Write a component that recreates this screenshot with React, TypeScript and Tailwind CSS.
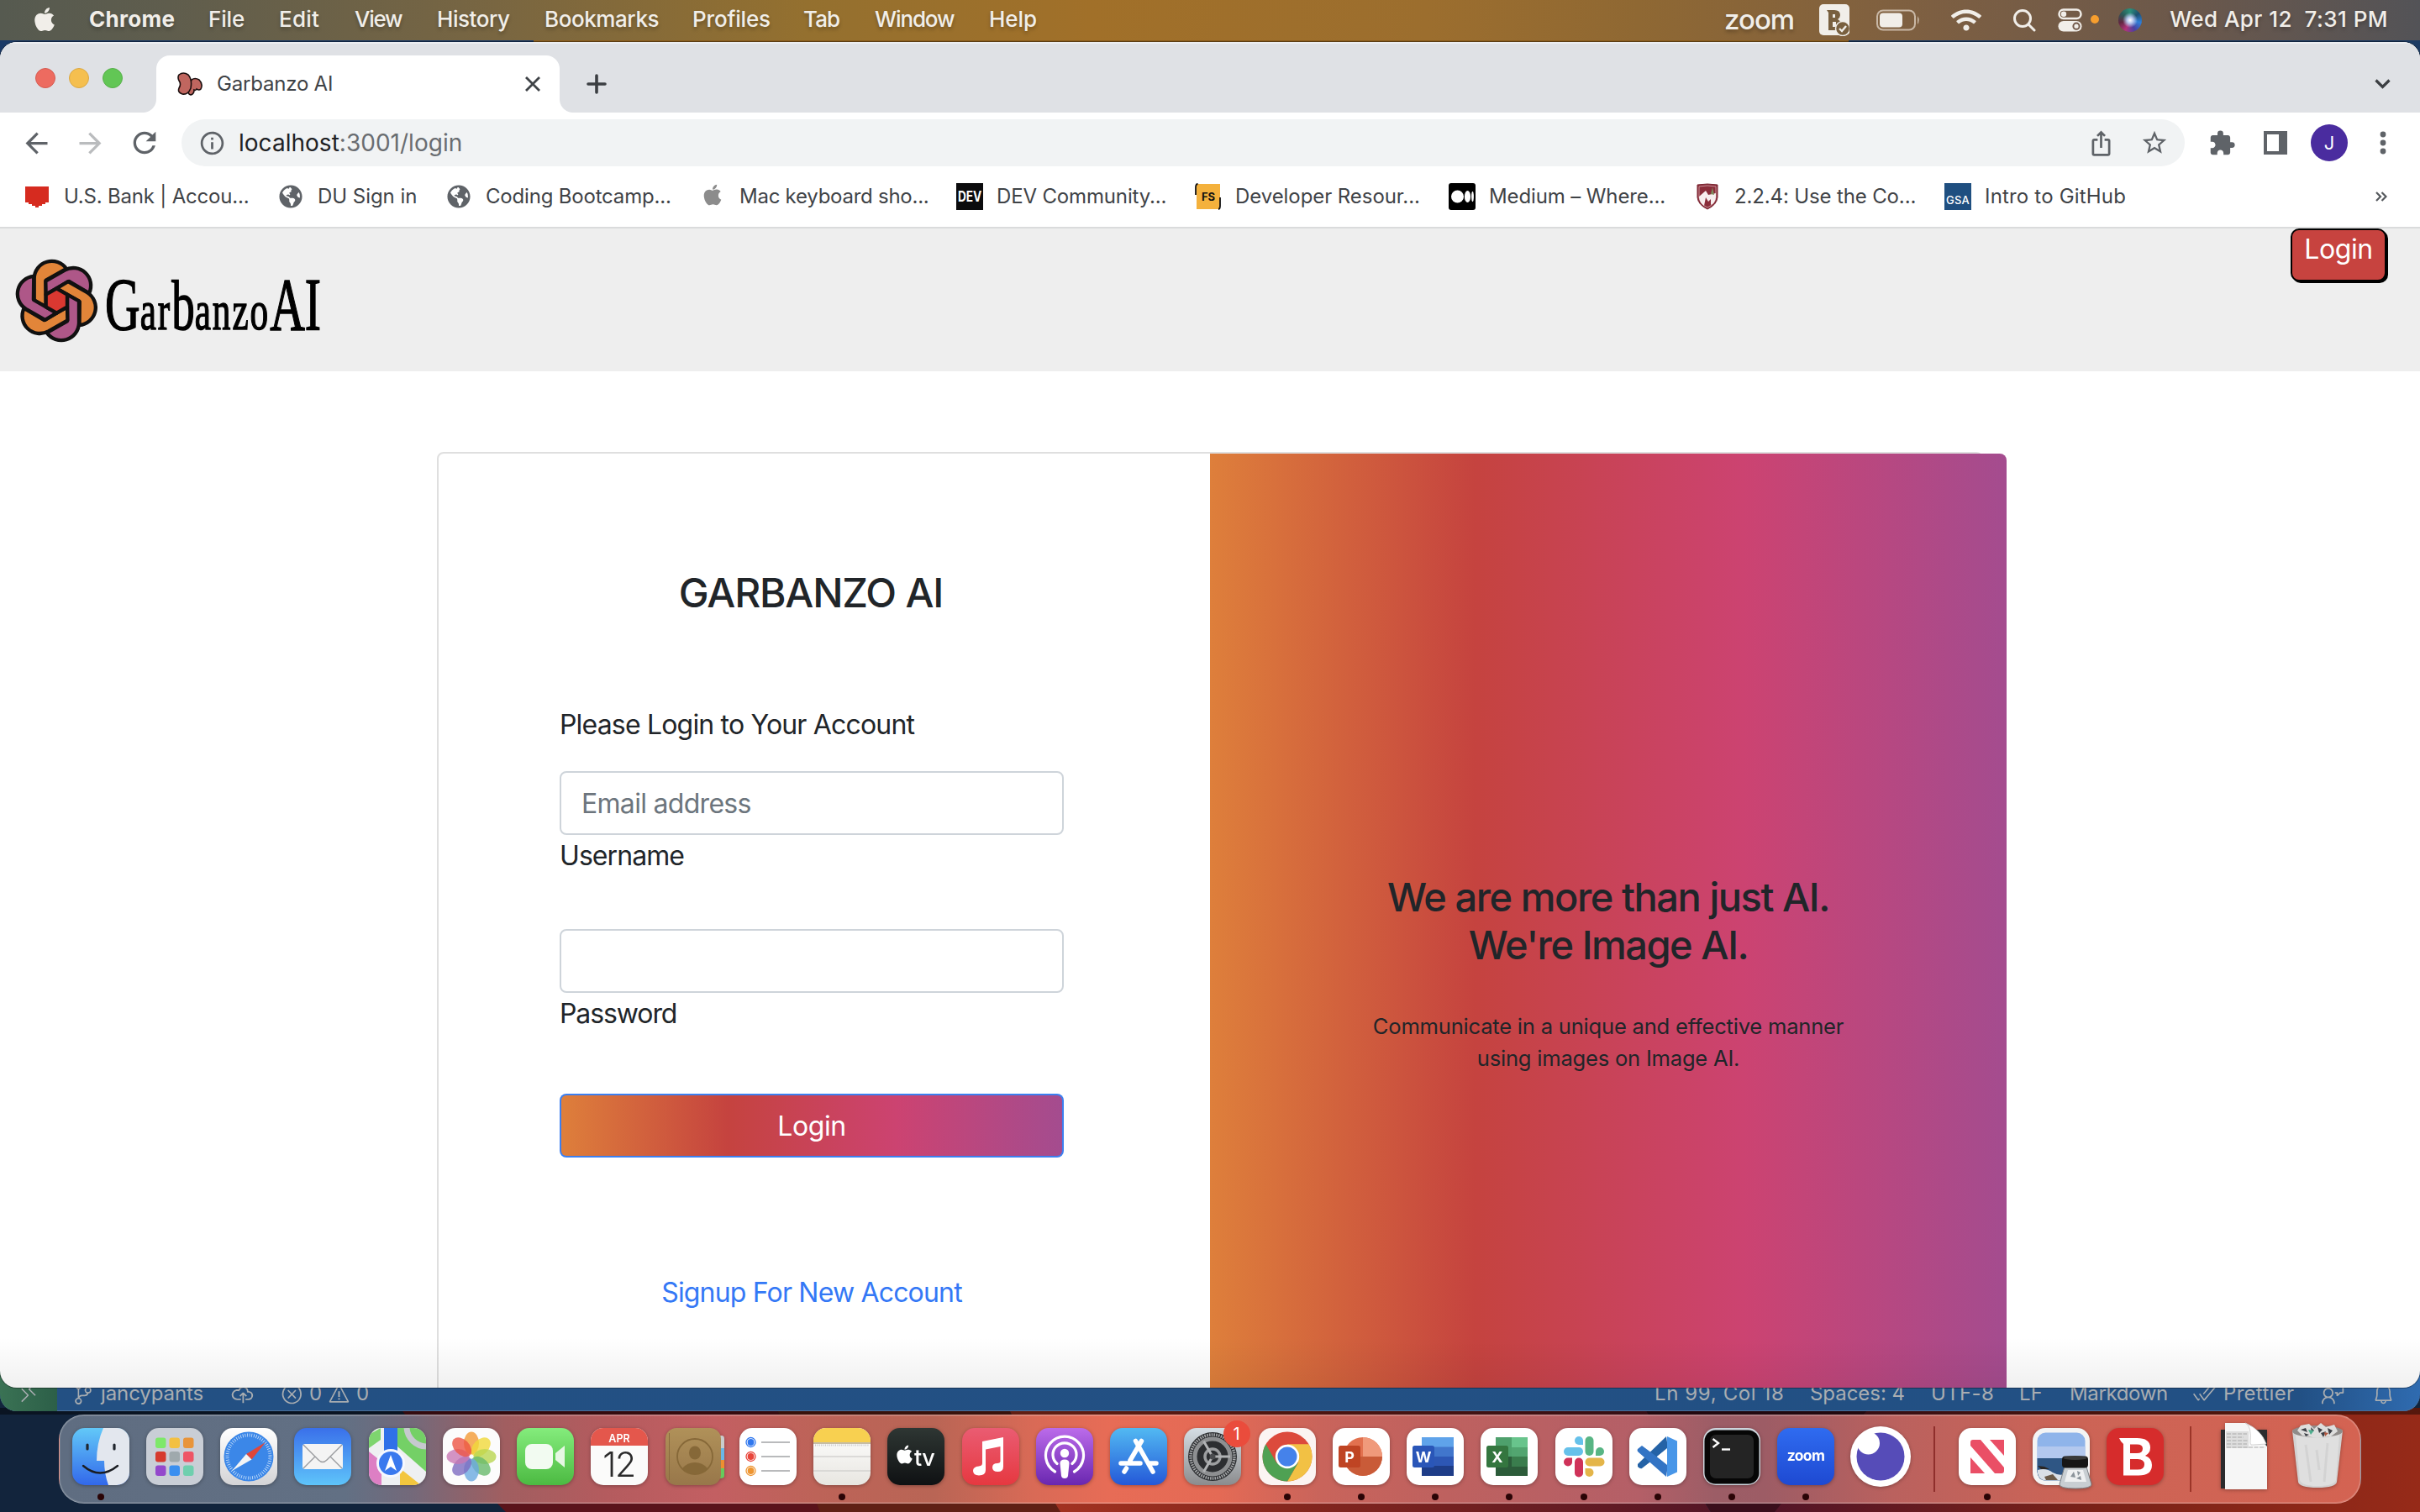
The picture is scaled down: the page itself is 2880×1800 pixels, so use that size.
import type { ReactNode } from "react";
import { FaApple, FaWifi, FaGlobeAmericas } from "react-icons/fa";
import {
  MdArrowBack,
  MdArrowForward,
  MdRefresh,
  MdInfoOutline,
  MdIosShare,
  MdStarBorder,
  MdExtension,
} from "react-icons/md";
import {
  VscRemote,
  VscSourceControl,
  VscCloudUpload,
  VscError,
  VscWarning,
  VscCheckAll,
  VscFeedback,
  VscBell,
} from "react-icons/vsc";

function Wallpaper() {
  return (
    <svg className="absolute inset-0" width="2880" height="1800" viewBox="0 0 2880 1800">
      <defs>
        <linearGradient id="wpRight" x1="0" x2="1">
          <stop offset="0" stopColor="#541527" />
          <stop offset="0.5" stopColor="#7a2218" />
          <stop offset="1" stopColor="#962a18" />
        </linearGradient>
        <linearGradient id="wpMid" x1="0" x2="1">
          <stop offset="0" stopColor="#a83522" />
          <stop offset="0.4" stopColor="#85261d" />
          <stop offset="1" stopColor="#551626" />
        </linearGradient>
      </defs>
      <rect width="2880" height="1800" fill="#12243c" />
      <path d="M635 46H2200V52H635Z" fill="#8a5c1c" />
      <path d="M2200 46H2880V100H2200Z" fill="#1b3a63" />
      <rect y="46" width="635" height="60" fill="#1b3a66" />
      <path d="M476 1676L482 1684L594 1792L602 1800H980L924 1676Z" fill="#5a131b" />
      <path d="M924 1676L972 1790L976 1800H1262L1200 1676Z" fill="#602015" />
      <path d="M1200 1676L1256 1790L1262 1800H2036L1957 1676Z" fill="url(#wpMid)" />
      <path d="M1957 1676L2030 1790L2036 1800H2112L2225 1676Z" fill="#3a0e1b" />
      <path d="M2225 1676L2120 1790L2112 1800H2880V1676Z" fill="url(#wpRight)" />
      <rect y="1676" width="2880" height="8" fill="#000" opacity="0.42" />
    </svg>
  );
}

const menus: [string, string][] = [
  ["Chrome", "w-[142px] font-bold tracking-[0.29px]"],
  ["File", "w-[84px] tracking-[-0.14px]"],
  ["Edit", "w-[90px] tracking-[0.23px]"],
  ["View", "w-[98px] tracking-[-1.28px]"],
  ["History", "w-[128px] tracking-[-0.45px]"],
  ["Bookmarks", "w-[176px] tracking-[-0.42px]"],
  ["Profiles", "w-[132px] tracking-[-0.18px]"],
  ["Tab", "w-[85px] tracking-[-0.92px]"],
  ["Window", "w-[136px] tracking-[-1.12px]"],
  ["Help", "tracking-[-0.06px]"],
];

function MenuBar() {
  return (
    <header className="relative flex h-[48px] items-center bg-[linear-gradient(90deg,#565a50_0px,#5f5d4d_200px,#766543_550px,#94702f_960px,#a17029_1300px,#9c6e2e_1700px,#8f6833_1950px,#7d5f42_2300px,#6b584b_2600px,#535357_2880px)] pb-[3px] pl-[37px] text-[26px] font-medium text-[#f1eee9] [text-shadow:0_3px_4px_rgba(0,0,0,0.25)]">
      <FaApple className="mr-[37px] size-[32px]" />
      {menus.map(([label, cls]) => (
        <span key={label} className={`shrink-0 whitespace-nowrap ${cls}`}>
          {label}
        </span>
      ))}
      <span className="ml-auto mr-[30px] text-[33px] font-medium leading-[40px] tracking-[-1px]">zoom</span>
      <svg className="mt-[3px] mr-[32px]" width="36" height="38" viewBox="0 0 36 38">
        <rect width="36" height="37" rx="5" fill="#f1eee9" />
        <path d="M9 7H18Q25 7 25 13Q25 16 22 18Q26 20 26 24Q26 31 18 31H11V10ZM16 12V16H19V12ZM16 21V27H20V21Z" fill="#79603f" fillRule="evenodd" />
        <circle cx="28" cy="29" r="8.5" fill="#79603f" stroke="#f1eee9" strokeWidth="1.5" />
        <path d="M24 29L27 32L32 26" fill="none" stroke="#f1eee9" strokeWidth="2.4" />
      </svg>
      <svg className="mt-[3px] mr-[36px]" width="53" height="26" viewBox="0 0 53 26">
        <rect x="1" y="1.5" width="45" height="23" rx="7" fill="none" stroke="#c9b8a6" strokeWidth="2" />
        <rect x="4" y="4.500" width="27" height="17" rx="4" fill="#f1eee9" />
        <path d="M49 8Q52.500 13 49 18Z" fill="#c9b8a6" />
      </svg>
      <FaWifi className="mt-[3px] mr-[37px] size-[36px]" />
      <svg className="mt-[3px] mr-[26px]" width="28" height="28" viewBox="0 0 28 28" fill="none" stroke="#f1eee9" strokeWidth="3">
        <circle cx="12" cy="12" r="9.500" />
        <path d="M19 19L26 26" strokeLinecap="round" />
      </svg>
      <svg className="mt-[3px] mr-[9px]" width="30" height="28" viewBox="0 0 30 28">
        <rect x="1.500" y="1.500" width="26" height="10.500" rx="5.200" fill="none" stroke="#f1eee9" strokeWidth="2.500" />
        <circle cx="7" cy="6.700" r="3.200" fill="#f1eee9" />
        <rect x="0.500" y="15" width="28" height="12.500" rx="6.200" fill="#f1eee9" />
        <circle cx="22" cy="21.200" r="3.600" fill="none" stroke="#72594a" strokeWidth="2" />
      </svg>
      <span className="mr-[23px] size-[10px] rounded-full bg-[#f79e2e]" />
      <span className="mt-[3px] mr-[33px] size-[28px] rounded-full bg-[radial-gradient(circle_at_50%_50%,#ffffff_0%,#b8c8ee_18%,transparent_45%),conic-gradient(#2c8f7a,#1d4f6e,#2f7fd8,#4a3fa0,#b2347a,#5f2740,#2c5a58,#2c8f7a)]" />
      <span className="mr-[38px] whitespace-pre tracking-[0.44px]">Wed Apr 12  7:31 PM</span>
    </header>
  );
}

function TabStrip() {
  return (
    <div className="flex h-[84px] shrink-0 items-end bg-[#dfe1e5] pl-[42px] shadow-[inset_0_2px_0_#eceef1]">
      <div className="flex h-[82px] gap-4">
        <span className="mt-[29px] size-[24px] rounded-full border border-[#d55a50] bg-[#ed6b60]" />
        <span className="mt-[29px] size-[24px] rounded-full border border-[#dba844] bg-[#f5bf4f]" />
        <span className="mt-[29px] size-[24px] rounded-full border border-[#57b04a] bg-[#62c655]" />
      </div>
      <span className="ml-[24px] size-4 bg-[radial-gradient(circle_at_0_0,#dfe1e5_15.500px,#fff_16.500px)]" />
      <div className="flex h-[68px] w-[480px] items-center rounded-t-[16px] bg-white pl-[25px] text-[24px] text-[#3f4347]">
        <svg width="31" height="28" viewBox="0 0 31 28" fill="#c0665f" stroke="#1d1010" strokeWidth="1.600">
          <path d="M17 9Q21 6 26 9Q31 14 28 20Q26 22 23 20Q22 22 20 21Q20 26 16 27Q12 26 13 20Z" />
          <path d="M2 3Q7 -1 13 3Q18 9 16 19Q13 27 6 26Q0 24 2 19Q5 14 2 10Q0 6 2 3Z" />
        </svg>
        <span className="ml-[16px] tracking-[-0.200px]">Garbanzo AI</span>
        <svg className="ml-auto mr-[22px]" width="20" height="20" viewBox="0 0 20 20" stroke="#3f4347" strokeWidth="2.800">
          <path d="M2 2L18 18M18 2L2 18" />
        </svg>
      </div>
      <span className="size-4 bg-[radial-gradient(circle_at_100%_0,#dfe1e5_15.500px,#fff_16.500px)]" />
      <div className="ml-[16px] flex h-[68px] flex-1 items-center justify-between pr-[35px]">
        <svg width="24" height="24" viewBox="0 0 24 24" stroke="#3b3e42" strokeWidth="3.600" strokeLinecap="round">
          <path d="M2 12H22M12 2V22" />
        </svg>
        <svg width="19" height="14" viewBox="0 0 19 14" fill="none" stroke="#3b3e42" strokeWidth="3.200">
          <path d="M1.500 2.500L9.500 10.500L17.500 2.500" />
        </svg>
      </div>
    </div>
  );
}

function Toolbar() {
  return (
    <div className="flex h-[64px] shrink-0 items-center bg-white pt-[8px] pl-[24px] text-[#5f6368]">
      <MdArrowBack className="size-[39px]" />
      <MdArrowForward className="ml-[25px] size-[39px] text-[#babcbe]" />
      <MdRefresh className="ml-[25px] size-[40px]" />
      <div className="ml-[24px] flex h-[56px] w-[2384px] items-center rounded-full bg-[#f1f3f4] pr-[19px] pl-[20px]">
        <MdInfoOutline className="size-[33px]" />
        <span className="ml-[15px] flex-1 text-[28px] tracking-[0.020px] text-[#6a6d71]">
          <span className="text-[#202124]">localhost</span>:3001/login
        </span>
        <MdIosShare className="size-[33px]" />
        <MdStarBorder className="ml-[30px] size-[34px]" />
      </div>
      <MdExtension className="ml-[28px] size-[33px]" />
      <span className="ml-[33px] size-[28px] border-[4px] border-r-[10px] border-[#5f6368]" />
      <span className="ml-[28px] grid size-[44px] place-items-center rounded-full bg-[#4a2c9f] text-[22px] text-white">J</span>
      <svg className="ml-[38px]" width="8" height="28" viewBox="0 0 8 28" fill="#5f6368">
        <circle cx="4" cy="4" r="3.400" />
        <circle cx="4" cy="14" r="3.400" />
        <circle cx="4" cy="24" r="3.400" />
      </svg>
    </div>
  );
}

const Shield = () => (
  <svg width="32" height="32" viewBox="0 0 32 32">
    <path d="M4 2Q16 0 28 2V17Q27 26 16 31Q5 26 4 17Z" fill="#8a2d3a" stroke="#7a2834" />
    <path d="M6 4Q16 2 26 4V17Q25 25 16 29Q7 25 6 17Z" fill="none" stroke="#d8a9ae" strokeWidth="0.800" />
    <path d="M6 16L14 9L17 14L26 12V17Q25 24 20 26V19L17 22L14 17L12 27Q7 24 6 17Z" fill="#f7eeee" />
    <path d="M20 13L22 5L24 14Z" fill="#7d8a5a" />
  </svg>
);

const bookmarks: { label: string; cls: string; icon: ReactNode }[] = [
  {
    label: "U.S. Bank | Accou...",
    cls: "w-[302px] tracking-[-0.200px]",
    icon: (
      <svg width="32" height="32" viewBox="0 0 32 32">
        <path d="M2 4H30V23H26V25H22V27H18V29H14V27H10V25H6V23H2Z" fill="#d62b1f" />
      </svg>
    ),
  },
  { label: "DU Sign in", cls: "w-[200px] tracking-[-0.040px]", icon: <FaGlobeAmericas className="size-[28px] text-[#5f6368]" /> },
  { label: "Coding Bootcamp...", cls: "w-[302px] tracking-[-0.190px]", icon: <FaGlobeAmericas className="size-[28px] text-[#5f6368]" /> },
  { label: "Mac keyboard sho...", cls: "w-[306px] tracking-[-0.250px]", icon: <FaApple className="size-[28px] -translate-y-[2px] text-[#8c8c8c]" /> },
  {
    label: "DEV Community...",
    cls: "w-[284px] tracking-[-0.150px]",
    icon: (
      <svg width="32" height="32" viewBox="0 0 32 32">
        <rect width="32" height="32" fill="#0b0b0d" />
        <text x="2" y="22" fontSize="17" fontWeight="700" fontFamily="Inter" fill="#fff" textLength="28" lengthAdjust="spacingAndGlyphs">DEV</text>
      </svg>
    ),
  },
  {
    label: "Developer Resour...",
    cls: "w-[302px] tracking-[-0.070px]",
    icon: (
      <svg width="32" height="32" viewBox="0 0 32 32">
        <rect x="2" y="1" width="28" height="30" fill="#f4b13c" />
        <path d="M3.500 1Q1 1 1 5V14M30 17V27Q30 31 28 31" fill="none" stroke="#111" strokeWidth="1.800" />
        <text x="16" y="21" fontSize="13" fontWeight="700" textAnchor="middle" fontFamily="Inter" fill="#111">FS</text>
      </svg>
    ),
  },
  {
    label: "Medium – Where...",
    cls: "w-[292px] tracking-[-0.120px]",
    icon: (
      <svg width="32" height="32" viewBox="0 0 32 32" fill="#fff">
        <rect width="32" height="32" rx="3" fill="#000" />
        <circle cx="10.500" cy="16" r="7.500" />
        <ellipse cx="22.500" cy="16" rx="3.600" ry="7" />
        <ellipse cx="28.500" cy="16" rx="1.400" ry="6.200" />
      </svg>
    ),
  },
  { label: "2.2.4: Use the Co...", cls: "w-[298px] tracking-[-0.140px]", icon: <Shield /> },
  {
    label: "Intro to GitHub",
    cls: "w-[260px] tracking-[0.180px]",
    icon: (
      <span className="grid size-[32px] place-items-center bg-[#1f4f80] pt-[9px] text-[13px] font-medium leading-none text-white">GSA</span>
    ),
  },
];

function BookmarksBar() {
  return (
    <div className="flex h-[74px] shrink-0 items-center border-b-2 border-[#dadbdc] bg-white pl-[28px] text-[24px] text-[#3f4347]">
      {bookmarks.map((b) => (
        <div key={b.label} className={`flex shrink-0 items-center whitespace-nowrap ${b.cls}`}>
          <span className="mr-[16px] grid size-[32px] shrink-0 place-items-center">{b.icon}</span>
          {b.label}
        </div>
      ))}
      <svg className="mr-[39px] ml-auto" width="14" height="12" viewBox="0 0 14 12" fill="none" stroke="#55595d" strokeWidth="2.200">
        <path d="M1 1L6 6L1 11M7.500 1L12.500 6L7.500 11" />
      </svg>
    </div>
  );
}

const petals = [0, 60, 120, 180, 240, 300];

function Logo() {
  return (
    <svg className="overflow-visible" width="370" height="116" viewBox="0 0 370 116">
      <svg y="1" width="98" height="100" viewBox="55 143 294 300" stroke="#111" strokeWidth="13" strokeLinejoin="round">
        {petals.map((a, i) => (
          <path
            key={a}
            d="M123 292V213A63 63 0 0 1 238 179L165 220V315Z"
            transform={`rotate(${a} 203 293)`}
            fill={i % 2 ? "#ae5788" : "#e28539"}
          />
        ))}
        <path d="M203 249L241 271V315L203 337L165 315V271Z" fill="#da3831" />
      </svg>
      <text
        x="107"
        y="85"
        fontFamily="Liberation Serif"
        fontSize="88"
        textLength="257"
        lengthAdjust="spacingAndGlyphs"
        fill="#000"
        stroke="#000"
        strokeWidth="1.500"
      >
        G
        <tspan fontSize="66" letterSpacing="3">ar</tspan>
        <tspan fontSize="84">b</tspan>
        <tspan fontSize="66" letterSpacing="3">anzo</tspan>
        AI
      </text>
    </svg>
  );
}

function SiteNav() {
  return (
    <nav className="flex h-[170px] shrink-0 items-start justify-between bg-[#eeeeee] pr-[40px] pl-[18px]">
      <div className="pt-[35px]">
        <Logo />
      </div>
      <button className="h-[63px] w-[114px] rounded-[10px] border-2 border-black bg-[#c7433f] pb-[14px] text-[32px] leading-[40px] tracking-[-0.400px] text-white shadow-[2px_2px_0_#000]">
        Login
      </button>
    </nav>
  );
}

function LoginCard() {
  return (
    <div className="mt-[96px] ml-[520px] flex h-[1200px] w-[1840px] shrink-0 rounded-[8px] border-2 border-[#dfdfdf] text-[32px] leading-[48px] text-[#212529]">
      <div className="w-[918px] shrink-0 pt-[137px] pl-[144px]">
        <form className="flex w-[600px] flex-col">
          <h4 className="-ml-[2px] text-center text-[48px] leading-[58px] font-medium tracking-[-1.200px]">GARBANZO AI</h4>
          <p className="mt-[104px] mb-[31px] tracking-[-0.820px]">Please Login to Your Account</p>
          <input
            className="h-[76px] rounded-[8px] border-2 border-[#ced4da] px-[24px] tracking-[-0.700px] placeholder:text-[#6c757d]"
            placeholder="Email address"
          />
          <label className="pt-px tracking-[-0.920px]">Username</label>
          <input className="mt-[63px] h-[76px] rounded-[8px] border-2 border-[#ced4da] px-[24px]" />
          <label className="pt-px tracking-[-1.090px]">Password</label>
          <div className="mt-[71px] h-[76px] rounded-[8px] bg-[#3c7ff0] p-[2px]">
            <div className="grid h-full place-items-center rounded-[6px] bg-[linear-gradient(90deg,#de7f3b_0%,#c5433f_33.300%,#cc4371_67%,#a44c8f_100%)] pt-[2px] tracking-[-0.400px] text-white">
              Login
            </div>
          </div>
          <a className="mt-[137px] text-center tracking-[-0.820px] text-[#3478f6]">Signup For New Account</a>
        </form>
      </div>
      <div className="flex w-[948px] shrink-0 flex-col items-center rounded-tr-[8px] bg-[linear-gradient(90deg,#de7f3b_0%,#c5433f_33.300%,#cc4371_67%,#a44c8f_100%)] pt-[499px] text-center">
        <h4 className="text-[47px] leading-[57px] font-medium tracking-[-1.470px]">
          We are more than just AI.
          <br />
          We're Image AI.
        </h4>
        <p className="mt-[50px] text-[25.600px] leading-[38.400px] tracking-[-0.230px]">
          Communicate in a unique and effective manner
          <br />
          using images on Image AI.
        </p>
      </div>
    </div>
  );
}

function StatusBar() {
  return (
    <div className="relative -mt-[22px] flex h-[50px] items-center overflow-hidden rounded-b-[20px] bg-[linear-gradient(90deg,#235083_0%,#225084_95%,#2f6bb0_100%)] pt-[8px] text-[24px] whitespace-nowrap text-[#a9adb1] shadow-[inset_0_-1px_0_#4a6f9a]">
      <span className="-mt-[8px] grid h-[50px] w-[68px] place-items-center bg-[linear-gradient(90deg,#3a7254,#2c5f48)]">
        <VscRemote className="mt-[6px] size-[28px]" />
      </span>
      <VscSourceControl className="ml-[18px] size-[26px]" />
      <span className="ml-[8px] w-[154px] tracking-[-0.100px]">jancypants</span>
      <VscCloudUpload className="size-[29px]" />
      <VscError className="ml-[31px] size-[27px]" />
      <span className="ml-[7px] w-[20px]">0</span>
      <VscWarning className="ml-[2px] size-[27px]" />
      <span className="ml-[7px] w-[20px]">0</span>
      <span className="ml-auto w-[185px] tracking-[0.620px]">Ln 99, Col 18</span>
      <span className="w-[144px] tracking-[-0.040px]">Spaces: 4</span>
      <span className="w-[105px] tracking-[0.360px]">UTF-8</span>
      <span className="w-[60px] tracking-[0.200px]">LF</span>
      <span className="w-[147px] tracking-[-0.360px]">Markdown</span>
      <VscCheckAll className="size-[28px]" />
      <span className="ml-[8px] w-[117px] tracking-[0.300px]">Prettier</span>
      <VscFeedback className="size-[28px]" />
      <VscBell className="mr-[30px] ml-[32px] size-[27px]" />
    </div>
  );
}

const T = ({ children, bg = "#fff", id, stops }: { children?: ReactNode; bg?: string; id?: string; stops?: [string, string] }) => (
  <>
    {id && stops && (
      <defs>
        <linearGradient id={id} x2="0" y2="1">
          <stop offset="0" stopColor={stops[0]} />
          <stop offset="1" stopColor={stops[1]} />
        </linearGradient>
      </defs>
    )}
    <rect width="68" height="68" rx="15" fill={id ? `url(#${id})` : bg} />
    {children}
  </>
);

const launchpad = ["#7ee86a", "#f3c042", "#e8943a", "#d63a2e", "#9fa9ad", "#ee5566", "#9448cc", "#3a8ff0", "#6fcfae"];
const photoPetals = ["#f39a36", "#f0d83a", "#b9d650", "#68b96b", "#6aa9e0", "#7d6cc0", "#c878b4", "#ec5545"];

const Finder = (
  <>
    <defs>
      <clipPath id="finderClip"><rect width="68" height="68" rx="15" /></clipPath>
    </defs>
    <T id="gFinder" stops={["#62c8f8", "#3268ea"]} />
    <g clipPath="url(#finderClip)">
      <path d="M37 0Q29 18 29 39H38Q38 54 43 68H68V0Z" fill="#e3e7ee" />
      <path d="M18 20V25M50 20V25" stroke="#20262e" strokeWidth="3.200" strokeLinecap="round" />
      <path d="M13 45Q33 62 54 45" fill="none" stroke="#1a1d22" strokeWidth="2.400" strokeLinecap="round" />
    </g>
  </>
);

const Settings = (
  <>
    <T id="gSet" stops={["#d5dee4", "#8b8c8e"]} />
    <circle cx="34" cy="34" r="29" fill="#2c2e31" />
    <circle cx="34" cy="34" r="26" fill="none" stroke="#a5a7a9" strokeWidth="3.500" strokeDasharray="1.600 1.200" />
    <circle cx="34" cy="34" r="21" fill="none" stroke="#8d8f91" strokeWidth="5" />
    <circle cx="34" cy="34" r="9" fill="none" stroke="#9c9ea0" strokeWidth="3.500" />
    <path d="M34 34H55M34 34L23.500 15.800M34 34L23.500 52.200" stroke="#b0b2b4" strokeWidth="3" />
    <circle cx="34" cy="34" r="3.500" fill="#4a4c4f" />
  </>
);

const Office = (letter: string, badge: string, body: ReactNode) => (
  <>
    <T />
    {body}
    <rect x="7" y="21" width="26" height="26" rx="2.500" fill={badge} />
    <text x="20" y="41" fontSize="18" fontWeight="700" textAnchor="middle" fontFamily="Inter" fill="#fff">{letter}</text>
  </>
);

const dockApps: { name: string; art: ReactNode; dot?: boolean; badge?: string }[] = [
  { name: "finder", dot: true, art: Finder },
  {
    name: "launchpad",
    art: (
      <T bg="#c9ced6">
        {launchpad.map((c, i) => (
          <rect key={c} x={11 + (i % 3) * 16.500} y={11.500 + Math.floor(i / 3) * 16.500} width="12.500" height="12.500" rx="3" fill={c} />
        ))}
      </T>
    ),
  },
  {
    name: "safari",
    art: (
      <T id="gSaf" stops={["#ffffff", "#d4d4d6"]}>
        <circle cx="34" cy="34" r="29.500" fill="#3b87e8" />
        <circle cx="34" cy="34" r="25.500" fill="none" stroke="#cfe4fb" strokeWidth="4" strokeDasharray="0.800 1.870" />
        <path d="M54 17L31 31L37.500 37.500Z" fill="#e0463a" />
        <path d="M14 51L31 31L37.500 37.500Z" fill="#f2f4f6" />
      </T>
    ),
  },
  {
    name: "mail",
    art: (
      <T id="gMail" stops={["#3a70ea", "#5ec4fa"]}>
        <rect x="10" y="19" width="48" height="30" rx="3" fill="#f4f4f4" />
        <path d="M11 20L29 38Q34 43 39 38L57 20M11 48L25 34M57 48L43 34" fill="none" stroke="#9a9c9f" strokeWidth="1.400" />
      </T>
    ),
  },
  {
    name: "maps",
    art: (
      <>
        <defs><clipPath id="mapClip"><rect width="68" height="68" rx="15" /></clipPath></defs>
        <g clipPath="url(#mapClip)">
          <rect width="68" height="68" fill="#eef0f2" />
          <path d="M0 8L14 0V14L0 24Z" fill="#7ed56f" />
          <path d="M34 0H68V52L34 22Z" fill="#74d066" />
          <path d="M0 28L15 40V68H0Z" fill="#dd7fc4" />
          <path d="M37 48L62 68H37Z" fill="#f3c63e" />
          <path d="M45 0A24 24 0 0 0 68 22" fill="none" stroke="#c6c9cf" strokeWidth="7" />
          <rect x="18" width="16" height="30" fill="#2f70e8" />
          <circle cx="26" cy="42" r="17" fill="#f5f8ff" />
          <circle cx="26" cy="42" r="14" fill="#3a79ee" />
          <path d="M26 32L33 51L26 46L19 51Z" fill="#fff" />
        </g>
      </>
    ),
  },
  {
    name: "photos",
    art: (
      <T bg="#fcfcfc">
        {photoPetals.map((c, i) => (
          <ellipse key={c} cx="34" cy="18" rx="9" ry="13.500" fill={c} opacity="0.800" transform={`rotate(${i * 45} 34 34)`} />
        ))}
      </T>
    ),
  },
  {
    name: "facetime",
    art: (
      <T id="gFt" stops={["#84ec7c", "#4cba42"]}>
        <rect x="10" y="19" width="33" height="30" rx="8" fill="#f2fbf1" />
        <path d="M46 30L57 21V47L46 38Z" fill="#e6f7e4" />
      </T>
    ),
  },
  {
    name: "calendar",
    art: (
      <T bg="#fbfbfa">
        <path d="M0 21V15A15 15 0 0 1 15 0H53A15 15 0 0 1 68 15V21Z" fill="#e4574c" />
        <text x="34" y="16.500" fontSize="12.500" fontWeight="600" textAnchor="middle" fontFamily="Inter" fill="#fff">APR</text>
        <text x="33.500" y="57.500" fontSize="41" fontWeight="300" letterSpacing="-1.500" textAnchor="middle" fontFamily="Inter" fill="#2b2b2b">12</text>
      </T>
    ),
  },
  {
    name: "contacts",
    art: (
      <>
        <path d="M62 9H67Q70 9 70 13V24H62Z" fill="#c9cccd" />
        <path d="M62 24H70V38H62Z" fill="#6ab7e8" />
        <path d="M62 38H70V48H62Z" fill="#ee8f30" />
        <path d="M62 48H70V57Q70 60 65 60H62Z" fill="#66cb5c" />
        <defs>
          <linearGradient id="gCon" x2="0" y2="1">
            <stop offset="0" stopColor="#b09159" />
            <stop offset="1" stopColor="#98774a" />
          </linearGradient>
        </defs>
        <rect width="66" height="68" rx="13" fill="url(#gCon)" />
        <path d="M4.500 6V62" stroke="#8a6b3f" strokeWidth="1" />
        <circle cx="35" cy="34" r="21" fill="none" stroke="#866838" strokeWidth="1.800" />
        <ellipse cx="35" cy="29.500" rx="7" ry="8" fill="#866838" />
        <path d="M20 48Q26 41 35 41Q44 41 50 48Q43 55 35 55Q27 55 20 48Z" fill="#866838" />
      </>
    ),
  },
  {
    name: "reminders",
    art: (
      <T>
        {["#2f77ee", "#e8453a", "#ee9531"].map((c, i) => (
          <g key={c}>
            <circle cx="13.500" cy={17 + i * 17} r="5.500" fill="none" stroke={c} strokeWidth="1.300" />
            <circle cx="13.500" cy={17 + i * 17} r="3.900" fill={c} />
            <path d={`M26 ${17 + i * 17}H60`} stroke="#b9babc" strokeWidth="1.800" />
          </g>
        ))}
      </T>
    ),
  },
  {
    name: "notes",
    dot: true,
    art: (
      <T id="gNotes" stops={["#ffffff", "#e8e6e1"]}>
        <path d="M0 17V15A15 15 0 0 1 15 0H53A15 15 0 0 1 68 15V17Z" fill="#f8d050" />
        <path d="M0 18H68" stroke="#b5a888" strokeWidth="1.500" />
        <path d="M2 20.500H66" stroke="#c5c5c5" strokeWidth="2" strokeDasharray="1 1.400" />
        <path d="M0 34H68M0 51H68" stroke="#d3d2d0" strokeWidth="1.500" />
      </T>
    ),
  },
  {
    name: "tv",
    art: (
      <T id="gTv" stops={["#2e3633", "#0f1113"]}>
        <g transform="translate(8 19)"><FaApple size={25} color="#fff" /></g>
        <text x="32" y="44.500" fontSize="27" fontWeight="500" fontFamily="Inter" fill="#fff" letterSpacing="-0.500">tv</text>
      </T>
    ),
  },
  {
    name: "music",
    art: (
      <T id="gMus" stops={["#ea5c72", "#e63840"]}>
        <path d="M24 16L49 11V46Q49 52 42.500 52Q36 52 36 47Q36 42 42 42Q45 42 45.500 40V22L28 25.500V50Q28 56.500 20 56.500Q13 56 13 51Q13 46 20 45.500Q24 45 24 42Z" fill="#fff" />
      </T>
    ),
  },
  {
    name: "podcasts",
    art: (
      <T id="gPod" stops={["#bb6bea", "#6a27b0"]}>
        <g fill="none" stroke="#fff" strokeWidth="3.200" strokeLinecap="round">
          <path d="M22.500 52A22.500 22.500 0 1 1 45.500 52" />
          <path d="M25 42.500A14 14 0 1 1 43 42.500" />
        </g>
        <circle cx="34" cy="30" r="5.200" fill="#fff" />
        <path d="M28.500 42Q28.500 37.500 34 37.500Q39.500 37.500 39.500 42L38 57Q37.500 60 34 60Q30.500 60 30 57Z" fill="#fff" />
      </T>
    ),
  },
  {
    name: "appstore",
    art: (
      <T id="gApp" stops={["#52b9f2", "#2458d8"]}>
        <g stroke="#fff" strokeWidth="5.500" strokeLinecap="round">
          <path d="M37.500 15.500L24 38.500M30.500 15.500L51 52M13 42H36M46 42H55M19.500 48L17 52" />
        </g>
      </T>
    ),
  },
  { name: "settings", badge: "1", art: Settings },
  {
    name: "chrome",
    dot: true,
    art: (
      <T bg="#fbf4f2">
        <circle cx="34" cy="34" r="29.500" fill="#dc4a3c" />
        <path d="M34 19.250H59.550A29.500 29.500 0 0 1 34 63.500L46.800 41.400Z" fill="#f2c144" />
        <path d="M21.200 41.400L8.450 19.250A29.500 29.500 0 0 0 34 63.500L46.800 41.400Z" fill="#4fa153" />
        <circle cx="34" cy="34" r="14.200" fill="#fff" />
        <circle cx="34" cy="34" r="11.500" fill="#4582ea" />
      </T>
    ),
  },
  {
    name: "powerpoint",
    dot: true,
    art: Office(
      "P",
      "#bf4423",
      <>
        <circle cx="36" cy="34" r="23" fill="#e2714f" />
        <path d="M36 34V11A23 23 0 0 1 59 34Z" fill="#f09a7b" />
        <path d="M59 34A23 23 0 0 1 13 34Z" fill="#c95b38" />
      </>,
    ),
  },
  {
    name: "word",
    dot: true,
    art: Office(
      "W",
      "#2a56b8",
      <>
        <rect x="18" y="11" width="38" height="12" fill="#5fa3ea" />
        <rect x="18" y="22.500" width="38" height="12" fill="#4176cc" />
        <rect x="18" y="34" width="38" height="12" fill="#2d57b5" />
        <rect x="18" y="45" width="38" height="12" fill="#1e3d88" />
      </>,
    ),
  },
  {
    name: "excel",
    dot: true,
    art: Office(
      "X",
      "#34763f",
      <>
        <rect x="18" y="11" width="20" height="23" fill="#4ea06c" />
        <rect x="37" y="11" width="19" height="12" fill="#68c48c" />
        <rect x="37" y="23" width="19" height="11" fill="#52a570" />
        <rect x="18" y="34" width="38" height="23" fill="#2c5c3a" />
        <rect x="37" y="34" width="19" height="12" fill="#3a7d4d" />
      </>,
    ),
  },
  {
    name: "slack",
    dot: true,
    art: (
      <T>
        <g fill="#66c1ea">
          <rect x="10" y="23" width="23" height="10" rx="5" />
          <path d="M33 20H28A5 5 0 1 1 33 15Z" />
        </g>
        <g fill="#58b584">
          <rect x="35.500" y="10" width="10" height="23" rx="5" />
          <path d="M48 33V28A5 5 0 1 1 53 33Z" />
        </g>
        <g fill="#e4b549">
          <rect x="35.500" y="35.500" width="23" height="10" rx="5" />
          <path d="M35.500 48H40.500A5 5 0 1 1 35.500 53Z" />
        </g>
        <g fill="#cf3259">
          <rect x="23" y="35.500" width="10" height="23" rx="5" />
          <path d="M20 35.500V40.500A5 5 0 1 1 15 35.500Z" />
        </g>
      </T>
    ),
  },
  {
    name: "vscode",
    dot: true,
    art: (
      <T>
        <path d="M10 43L44 10L46 24L15 48Q13 49 10 46Z" fill="#2462a6" />
        <path d="M10 25L15 21L46 44L44 58L10 28Q9 26 10 25Z" fill="#3374c4" />
        <path d="M45 10L57 15.500V52.500L45 58Z" fill="#4896e8" />
        <path d="M45 24V44L33 34Z" fill="#fff" />
      </T>
    ),
  },
  {
    name: "terminal",
    dot: true,
    art: (
      <T bg="#cdd5dc">
        <rect x="1.500" y="2.500" width="65" height="64" rx="13" fill="#060606" />
        <rect x="8" y="8" width="52" height="52" rx="7" fill="#242424" />
        <path d="M11.500 13L18 18L11.500 23" fill="none" stroke="#fff" strokeWidth="2.400" />
        <path d="M22 25.500H32" stroke="#fff" strokeWidth="2.400" />
      </T>
    ),
  },
  {
    name: "zoom",
    dot: true,
    art: (
      <T id="gZoom" stops={["#2f6bf0", "#1e49d2"]}>
        <text x="34" y="38.500" fontSize="17.500" fontWeight="700" letterSpacing="-0.600" textAnchor="middle" fontFamily="Inter" fill="#fff">zoom</text>
      </T>
    ),
  },
  {
    name: "eye",
    art: (
      <>
        <circle cx="34" cy="34" r="36" fill="#fff" />
        <circle cx="34" cy="34" r="28.500" fill="#564cb8" />
        <circle cx="19.500" cy="18" r="13.500" fill="#fff" />
      </>
    ),
  },
];

const recentApps: { name: string; art: ReactNode; dot?: boolean }[] = [
  {
    name: "news",
    dot: true,
    art: (
      <T>
        <path d="M17 14H26L54 47V51Q54 54 51 54H43L14 21V17Q14 14 17 14Z" fill="#ea4f66" />
        <path d="M37 14H54V33Z" fill="#ea4f66" />
        <path d="M14 35L31 54H14Z" fill="#ea4f66" />
      </T>
    ),
  },
  {
    name: "preview",
    art: (
      <>
        <T bg="#f4f4f4" />
        <rect x="5.500" y="5.500" width="57" height="57" rx="10" fill="#8fb4ea" />
        <path d="M5.500 22H62.500V38H5.500Z" fill="#b3c8ee" />
        <path d="M5.500 36H62.500V52Q62 62.500 52 62.500H15Q6 62 5.500 52Z" fill="#2f5684" />
        <path d="M6 50Q16 47 24 53Q31 57 38 55V62.500H15Q8 62 6 54Z" fill="#d9dfe6" />
        <path d="M6 45L14 46L20 49L10 49Z" fill="#2a2522" />
        <path d="M14 58L24 55L30 62H16Z" fill="#6b5a48" />
        <path d="M38 46H64L70 67Q70 72 51 72Q32 72 32 67Z" fill="#c8ced2" stroke="#7a8084" />
        <path d="M42 50H60L64 64H38Z" fill="#eef0f1" />
        <path d="M45 58L49 52L51 59ZM53 51L57 53L54 57ZM52 60L57 57L58 62Z" fill="#8a939a" />
        <rect x="35" y="33.500" width="31" height="14" rx="4" fill="#161616" />
        <ellipse cx="50.500" cy="35.500" rx="14" ry="2.500" fill="#3a3a3a" />
      </>
    ),
  },
  {
    name: "bitdefender",
    art: (
      <T bg="#d62c2c">
        <path d="M15 12H36Q52 12 52 23.500Q52 30 46 33Q54 36 54 44Q54 56.500 38 56.500H20V19Q17 17 15 12ZM28 19.500V30H36Q43 30 43 24.500Q43 19.500 36 19.500ZM28 37V49.500H37Q45 49.500 45 43.500Q45 37 37 37Z" fill="#fff" fillRule="evenodd" />
      </T>
    ),
  },
];

const documentArt = (
  <>
    <rect x="7" y="2" width="55" height="70" fill="#2b2b2d" />
    <path d="M12 -6H36Q42 -5 44 3L62 22V73H12Z" fill="#f6f6f6" />
    <path d="M13 4H40V24H13Z" fill="#dedede" />
    <path d="M14 7H38M14 11H34M14 15H40M14 19H38M14 23H60" stroke="#a9a9a9" strokeWidth="1.200" strokeDasharray="5 1.500" />
    <path d="M36 -6Q44 -3 42 18Q42 21 46 20L61 19Q55 2 36 -6Z" fill="#fff" stroke="#c9c9c9" strokeWidth="0.800" />
  </>
);

const trashArt = (
  <>
    <path d="M4 3Q34 -8 64 3L57 64Q56 71 34 71Q12 71 11 64Z" fill="#d2d2d2" />
    <path d="M8 8Q34 16 60 8L56 62Q54 69 34 69Q15 69 13 62Z" fill="#dfdfdf" />
    <ellipse cx="34" cy="4" rx="30" ry="7" fill="#8f8b89" />
    <path d="M10 3L14 -3L24 -5L30 1L38 -6L44 -1L54 -4L58 4L50 10L34 12L16 9Z" fill="#dededd" />
    <path d="M14 2L20 0L22 5ZM34 -1L40 2L36 6ZM46 0L52 3L48 8ZM26 -1L30 3L27 5ZM38 6L44 4L41 11ZM18 6L24 8L20 10Z" fill="#3c3f46" />
    <path d="M23 2L30 3L26 8Z" fill="#4fae8e" />
    <path d="M42 5L47 6L43 10Z" fill="#b0563f" />
    <path d="M20 20L26 64M46 18L42 64M33 26L36 50" stroke="#cfcfcf" strokeWidth="3" opacity="0.700" />
  </>
);

function DockItem({ art, dot, badge }: { art: ReactNode; dot?: boolean; badge?: string }) {
  return (
    <div className="relative flex w-[88.250px] shrink-0 flex-col items-center pt-[15px]">
      <svg className="overflow-visible drop-shadow-[0_1px_2px_rgba(0,0,0,0.300)]" width="68" height="68" viewBox="0 0 68 68">
        {art}
      </svg>
      {dot && <span className="mt-[10px] size-[8px] rounded-full bg-[#2a0406]" />}
      {badge && (
        <span className="absolute top-[6px] right-0 grid size-[32px] place-items-center rounded-full bg-[#ea4c3c] text-[20px] text-white">
          {badge}
        </span>
      )}
    </div>
  );
}

function Dock() {
  return (
    <div className="relative mt-[4px] ml-[70px] flex h-[106px] w-[2740px] rounded-[30px] border border-white/30 bg-[linear-gradient(90deg,#5f6d81_0px,#627084_340px,#74697a_420px,#a15e60_530px,#b45b5e_650px,#c35f62_780px,#bd6358_900px,#b96555_1040px,#d96a56_1160px,#e76c56_1250px,#e46a55_1380px,#c9645b_1500px,#be615f_1650px,#b45f67_1880px,#9c5d66_1970px,#9d5c65_2030px,#ba615e_2180px,#cc6456_2400px,#d46352_2740px)] pl-[4.500px] shadow-[inset_0_0_0_1px_rgba(255,255,255,0.120)]">
      {dockApps.map((a) => (
        <DockItem key={a.name} art={a.art} dot={a.dot} badge={a.badge} />
      ))}
      <span className="mt-[13px] mr-[18px] ml-[19px] h-[78px] w-[2px] shrink-0 bg-[#8f2f2c]" />
      {recentApps.map((a) => (
        <DockItem key={a.name} art={a.art} dot={a.dot} />
      ))}
      <span className="mt-[13px] mr-[18px] ml-[20px] h-[78px] w-[2px] shrink-0 bg-[#9c3528]" />
      <DockItem art={documentArt} />
      <DockItem art={trashArt} />
    </div>
  );
}

export default function App() {
  return (
    <div className="relative h-[1800px] w-[2880px] overflow-hidden font-['Inter',sans-serif]">
      <Wallpaper />
      <MenuBar />
      <main className="relative z-10 mt-[2px] flex h-[1602px] flex-col overflow-hidden rounded-[20px] bg-white shadow-[0_0_0_1px_rgba(0,0,0,0.350)]">
        <TabStrip />
        <Toolbar />
        <BookmarksBar />
        <SiteNav />
        <LoginCard />
        <div className="absolute inset-x-0 bottom-0 h-[60px] bg-[linear-gradient(180deg,transparent,rgba(0,0,0,0.060))]" />
      </main>
      <StatusBar />
      <Dock />
    </div>
  );
}
